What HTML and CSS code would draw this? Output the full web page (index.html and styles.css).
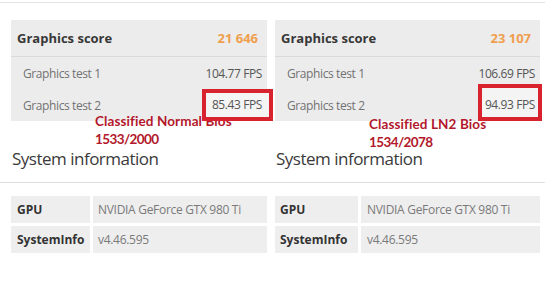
FILE: index.html
```html
<!DOCTYPE html>
<html>
<head>
<meta charset="utf-8">
<link rel="stylesheet" href="styles.css">
</head>
<body>
<div class="page">
  <div class="topline"></div>
  <div class="cols cols-top">
    <section class="col">
      <div class="score">
        <div class="score-head"><span>Graphics score</span><span class="score-val">21 646</span></div>
        <div class="score-row"><span>Graphics test 1</span><span class="fps">104.77 FPS</span></div>
        <div class="score-row"><span>Graphics test 2</span><span class="fps mark mark-left">85.43 FPS</span></div>
      </div>
      <div class="note note-left"><span class="note-title">Classified Normal Bios</span><span class="note-clock">1533/2000</span></div>
      <h2 class="heading">System information</h2>
    </section>
    <section class="col">
      <div class="score">
        <div class="score-head"><span>Graphics score</span><span class="score-val">23 107</span></div>
        <div class="score-row"><span>Graphics test 1</span><span class="fps">106.69 FPS</span></div>
        <div class="score-row"><span>Graphics test 2</span><span class="fps mark mark-right">94.93 FPS</span></div>
      </div>
      <div class="note note-right"><span class="note-title">Classified LN2 Bios</span><span class="note-clock">1534/2078</span></div>
      <h2 class="heading">System information</h2>
    </section>
  </div>
  <div class="sep"></div>
  <div class="cols cols-bottom">
    <div class="info info-left">
      <div class="lbl">GPU</div><div class="val">NVIDIA GeForce GTX 980 Ti</div>
      <div class="lbl">SystemInfo</div><div class="val">v4.46.595</div>
    </div>
    <div class="info info-right">
      <div class="lbl">GPU</div><div class="val">NVIDIA GeForce GTX 980 Ti</div>
      <div class="lbl">SystemInfo</div><div class="val">v4.46.595</div>
    </div>
  </div>
</div>
</body>
</html>
```
FILE: styles.css
```css
html, body {
  margin: 0;
  padding: 0;
  background: #ffffff;
}
.page {
  width: 545px;
  height: 287px;
  overflow: hidden;
  font-family: "Open Sans", "Noto Sans", sans-serif;
  color: #333;
}
.topline {
  height: 1px;
  margin-top: 2px;
  background: #e3e3e3;
}
.cols {
  display: grid;
  grid-template-columns: 256px 265px;
  column-gap: 8px;
  padding-left: 11px;
}
.cols-top {
  padding-top: 17px;
}
.cols-bottom {
  padding-top: 13px;
}
.col {
  position: relative;
}
.score {
  background: #ececec;
}
.score-head {
  height: 36px;
  border-bottom: 1px solid #dadada;
  display: flex;
  align-items: center;
  justify-content: space-between;
  padding: 0 9px 0 6px;
  font-size: 13px;
  font-weight: 700;
  color: #383838;
}
.score-val {
  color: #ef9e4e;
}
.score-row {
  height: 32px;
  display: flex;
  align-items: center;
  justify-content: space-between;
  padding: 0 5px 0 12px;
  font-size: 12px;
  letter-spacing: -0.4px;
  color: #727272;
}
.fps {
  color: #555;
}
.mark {
  position: relative;
  z-index: 2;
  line-height: 16px;
}
.mark::before,
.mark::after {
  content: "";
  position: absolute;
}
.mark::before {
  z-index: -1;
  background: #f4f4f4;
}
.mark::after {
  border: 4px solid #d8222e;
}
.mark-left::before,
.mark-left::after {
  top: -8px;
  bottom: -8px;
  left: -10px;
  right: -11px;
}
.mark-right::before,
.mark-right::after {
  top: -13px;
  bottom: -8px;
  left: -7px;
  right: -7px;
}
.note {
  position: absolute;
  z-index: 1;
  display: flex;
  flex-direction: column;
  font-family: Lato, "Liberation Sans", sans-serif;
  font-weight: 700;
  font-size: 13.5px;
  line-height: 17.5px;
  color: #b3182c;
}
.note-title {
  letter-spacing: 0.1px;
}
.note-clock {
  letter-spacing: -0.6px;
}
.note-left {
  top: 93px;
  left: 84px;
}
.note-right {
  top: 96px;
  left: 94px;
}
.heading {
  margin: 26px 0 0 1px;
  font-size: 17px;
  line-height: 24px;
  font-weight: 400;
  letter-spacing: -0.5px;
  color: #3a3a3a;
}
.sep {
  height: 1px;
  margin-top: 11px;
  background: #dedede;
}
.info {
  display: grid;
  grid-template-rows: 27px 27px;
  gap: 3px;
}
.info-left {
  grid-template-columns: 79px 1fr;
}
.info-right {
  grid-template-columns: 83px 1fr;
}
.lbl, .val {
  background: #eeeeee;
  display: flex;
  align-items: center;
  font-size: 12px;
}
.lbl {
  padding-left: 6px;
  font-weight: 700;
  color: #333;
}
.val {
  padding-left: 5px;
  color: #7a7a7a;
  letter-spacing: -0.3px;
}
.info-right .lbl {
  padding-left: 5px;
}
.info-right .val {
  padding-left: 6px;
}
```
